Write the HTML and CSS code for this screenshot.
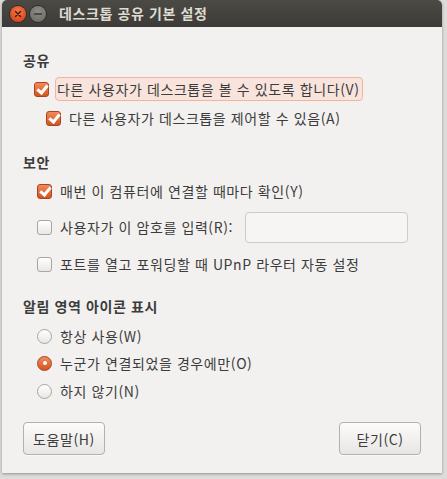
FILE: index.html
```html
<!DOCTYPE html>
<html lang="ko">
<head>
<meta charset="utf-8">
<title>데스크톱 공유 기본 설정</title>
<link rel="stylesheet" href="styles.css">
</head>
<body>
<div class="window">
  <div class="titlebar">
    <span class="wbtn close"><svg width="16" height="16" viewBox="0 0 16 16"><path d="M5.5 5.5 L10.5 10.5 M10.5 5.5 L5.5 10.5" stroke="#3a1a10" stroke-width="1.4" stroke-linecap="round"/></svg></span>
    <span class="wbtn mini"><svg width="16" height="16" viewBox="0 0 16 16"><path d="M4.5 8 H11.5" stroke="#3a3935" stroke-width="1.4" stroke-linecap="round"/></svg></span>
    <span class="title">데스크톱 공유 기본 설정</span>
  </div>
  <div class="content">
    <div class="heading h1">공유</div>
    <div class="row r1 ind1">
      <span class="check on"></span>
      <span class="label focus">다른 사용자가 데스크톱을 볼 수 있도록 합니다(V)</span>
    </div>
    <div class="row r2 ind2">
      <span class="check on"></span>
      <span class="label">다른 사용자가 데스크톱을 제어할 수 있음(A)</span>
    </div>

    <div class="heading h2">보안</div>
    <div class="row r3 ind3">
      <span class="check on"></span>
      <span class="label">매번 이 컴퓨터에 연결할 때마다 확인(Y)</span>
    </div>
    <div class="row r4 ind3">
      <span class="check"></span>
      <span class="label">사용자가 이 암호를 입력(R):</span>
      <span class="entry"></span>
    </div>
    <div class="row r5 ind3">
      <span class="check"></span>
      <span class="label">포트를 열고 포워딩할 때 UPnP 라우터 자동 설정</span>
    </div>

    <div class="heading h3">알림 영역 아이콘 표시</div>
    <div class="row r6 ind3">
      <span class="radio"></span>
      <span class="label">항상 사용(W)</span>
    </div>
    <div class="row r7 ind3">
      <span class="radio on"></span>
      <span class="label">누군가 연결되었을 경우에만(O)</span>
    </div>
    <div class="row r8 ind3">
      <span class="radio"></span>
      <span class="label">하지 않기(N)</span>
    </div>

    <div class="buttons">
      <span class="btn">도움말(H)</span>
      <span class="btn">닫기(C)</span>
    </div>
  </div>
</div>
</body>
</html>
```
FILE: styles.css
```css
html, body {
  margin: 0;
  padding: 0;
}
body {
  width: 447px;
  height: 479px;
  background: #dedcda;
  overflow: hidden;
  font-family: "Noto Sans CJK KR", "Noto Sans", sans-serif;
  font-size: 14px;
  letter-spacing: 0.6px;
  color: #3c3c3c;
}
.window {
  margin-left: 2px;
  width: 440px;
  height: 473px;
  background: #f2f1f0;
  border-radius: 5px 5px 0 0;
  box-shadow: 0 1px 3px rgba(0,0,0,0.35);
  display: flex;
  flex-direction: column;
}
.titlebar {
  height: 27px;
  flex: none;
  background: linear-gradient(#4b4a44, #3c3b37);
  border-radius: 5px 5px 0 0;
  display: flex;
  align-items: center;
  padding-left: 8px;
}
.wbtn {
  width: 16px;
  height: 16px;
  border-radius: 50%;
  display: flex;
  margin-right: 4px;
}
.wbtn.close {
  background: radial-gradient(circle at 50% 35%, #f47a4c, #dd4b1c 70%, #b93d14);
  box-shadow: 0 0 0 1px #2e2d29;
}
.wbtn.mini {
  background: radial-gradient(circle at 50% 35%, #8e8c87, #73716c 70%, #5d5b57);
  box-shadow: 0 0 0 1px #2e2d29;
}
.title {
  margin-left: 9px;
  font-weight: bold;
  color: #dfdbd2;
  font-size: 14px;
  line-height: 27px;
}
.content {
  padding: 23px 21px 0 21px;
  display: flex;
  flex-direction: column;
}
.heading {
  font-weight: bold;
  line-height: 20px;
  height: 20px;
}
.h2 { margin-top: 22px; }
.h3 { margin-top: 20px; }
.row {
  display: flex;
  align-items: center;
  height: 24px;
}
.r1 { margin-top: 7px; }
.r2 { margin-top: 5px; }
.r3 { margin-top: 7px; }
.r4 { margin-top: 9px; height: 30px; }
.r5 { margin-top: 10px; }
.r6 { margin-top: 8px; }
.r7 { margin-top: 3px; }
.r8 { margin-top: 4px; }
.ind1 { padding-left: 11px; }
.ind2 { padding-left: 23px; }
.ind3 { padding-left: 14px; }
.label {
  line-height: 20px;
  margin-left: 8px;
  white-space: nowrap;
}
.label.focus {
  margin-left: 6px;
  padding: 1px 2px 1px 1px;
  border: 1px solid #f1b49c;
  background: #f8e4dc;
  border-radius: 4px;
}
.check {
  width: 13px;
  height: 13px;
  border: 1px solid #a9a5a0;
  border-radius: 3px;
  background: linear-gradient(#ffffff, #e9e7e4);
  flex: none;
  position: relative;
}
.check.on {
  border-color: #a84420;
  background: linear-gradient(#f38a5c, #d3541f);
}
.check.on::after {
  content: "";
  position: absolute;
  left: 3.5px;
  top: 0px;
  width: 4px;
  height: 8px;
  border-right: 3px solid #fff;
  border-bottom: 3px solid #fff;
  transform: rotate(40deg);
}
.radio {
  width: 13px;
  height: 13px;
  border: 1px solid #a9a5a0;
  border-radius: 50%;
  background: linear-gradient(#ffffff, #e9e7e4);
  flex: none;
  position: relative;
}
.radio.on {
  border-color: #a84420;
  background: linear-gradient(#f38a5c, #d3541f);
}
.radio.on::after {
  content: "";
  position: absolute;
  left: 4.5px;
  top: 4.5px;
  width: 4px;
  height: 4px;
  border-radius: 50%;
  background: #fff;
}
.entry {
  margin-left: 12px;
  width: 161px;
  height: 29px;
  border: 1px solid #cfcbc6;
  border-radius: 4px;
  background: #f6f5f4;
}
.buttons {
  margin-top: 19px;
  display: flex;
  justify-content: space-between;
}
.btn {
  width: 80px;
  height: 31px;
  border: 1px solid #b4b0ab;
  border-radius: 4px;
  background: linear-gradient(#fbfbfa, #e8e6e3);
  display: flex;
  align-items: center;
  justify-content: center;
  box-shadow: 0 1px 0 rgba(255,255,255,0.6);
}
```
